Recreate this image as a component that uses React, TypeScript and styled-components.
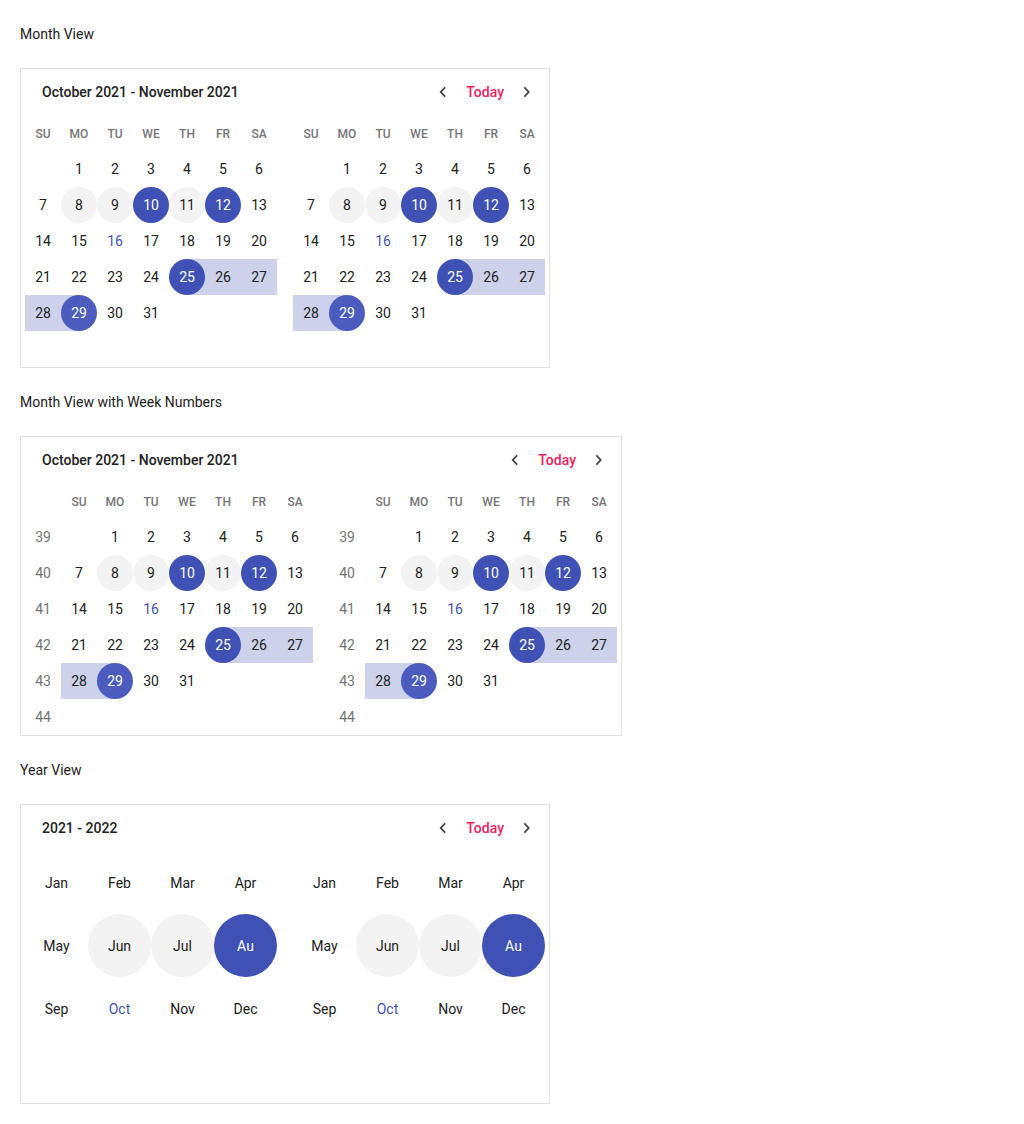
import React from "react";
import styled, { createGlobalStyle, css } from "styled-components";

const GlobalStyle = createGlobalStyle`
  html, body { margin: 0; padding: 0; background: #fff; }
  body { font-family: Roboto, "Noto Sans", Arial, sans-serif; color: #212121; }
  * { box-sizing: border-box; }
`;

const Page = styled.div`
  padding: 24px 20px;
  display: flex;
  flex-direction: column;
  align-items: flex-start;
  gap: 24px;
`;

const Label = styled.div`
  font-size: 14px;
  line-height: 20px;
  color: #212121;
`;

const Card = styled.div`
  height: 300px;
  border: 1px solid #e0e0e0;
  padding: 0 4px;
  display: flex;
  flex-direction: column;
  background: #fff;
`;

const Header = styled.div`
  height: 46px;
  flex-shrink: 0;
  display: flex;
  align-items: center;
  justify-content: space-between;
  padding: 0 6px 0 17px;
`;

const Title = styled.div`
  font-size: 14px;
  font-weight: 500;
  color: #212121;
`;

const Nav = styled.div`
  display: flex;
  align-items: center;
`;

const IconButton = styled.button`
  width: 24px;
  height: 24px;
  padding: 0;
  border: none;
  background: transparent;
  display: flex;
  align-items: center;
  justify-content: center;
  color: #424242;
  cursor: pointer;
`;

const TodayButton = styled.button`
  border: none;
  background: transparent;
  padding: 0 11px;
  height: 24px;
  font-family: inherit;
  font-size: 14px;
  font-weight: 500;
  color: #e91e63;
  cursor: pointer;
`;

const Panels = styled.div`
  display: flex;
  gap: 16px;
`;

const Grid = styled.div<{ $cols: number; $size: number }>`
  display: grid;
  grid-template-columns: repeat(${(p) => p.$cols}, ${(p) => p.$size}px);
`;

const WeekDay = styled.div`
  height: 36px;
  padding-top: 2px;
  display: flex;
  align-items: center;
  justify-content: center;
  font-size: 12px;
  font-weight: 500;
  color: #757575;
`;

const WeekNum = styled.div`
  height: 36px;
  display: flex;
  align-items: center;
  justify-content: center;
  font-size: 14px;
  color: #757575;
`;

type Range = "none" | "start" | "mid" | "end";

const RANGE_BG = "#cdd2ea";

const Cell = styled.div<{ $range: Range; $size: number }>`
  height: ${(p) => p.$size}px;
  display: flex;
  align-items: center;
  justify-content: center;
  ${(p) =>
    p.$range === "mid" &&
    css`
      background: ${RANGE_BG};
    `}
  ${(p) =>
    p.$range === "start" &&
    css`
      background: linear-gradient(to right, transparent 50%, ${RANGE_BG} 50%);
    `}
  ${(p) =>
    p.$range === "end" &&
    css`
      background: linear-gradient(to right, ${RANGE_BG} 50%, transparent 50%);
    `}
`;

type Mark = "none" | "hover" | "selected" | "selectedHover" | "today";

const Circle = styled.span<{ $mark: Mark; $size: number }>`
  width: ${(p) => p.$size}px;
  height: ${(p) => p.$size}px;
  border-radius: 50%;
  display: flex;
  align-items: center;
  justify-content: center;
  font-size: 14px;
  color: #212121;
  overflow: hidden;
  white-space: nowrap;
  ${(p) =>
    p.$mark === "hover" &&
    css`
      background: #f3f3f3;
    `}
  ${(p) =>
    p.$mark === "selected" &&
    css`
      background: #3f51b5;
      color: #fff;
    `}
  ${(p) =>
    p.$mark === "selectedHover" &&
    css`
      background: #4b5bbe;
      color: #fff;
    `}
  ${(p) =>
    p.$mark === "today" &&
    css`
      color: #3f51b5;
    `}
`;

const Chevron = ({ dir }: { dir: "left" | "right" }) => (
  <svg width="12" height="12" viewBox="0 0 12 12" fill="none">
    <path
      d={dir === "left" ? "M7.5 2 L3.8 6 L7.5 10" : "M4 2 L7.7 6 L4 10"}
      stroke="currentColor"
      strokeWidth="1.8"
      strokeLinecap="square"
      strokeLinejoin="miter"
    />
  </svg>
);

const CalHeader = ({ title }: { title: string }) => (
  <Header>
    <Title>{title}</Title>
    <Nav>
      <IconButton aria-label="previous">
        <Chevron dir="left" />
      </IconButton>
      <TodayButton>Today</TodayButton>
      <IconButton aria-label="next">
        <Chevron dir="right" />
      </IconButton>
    </Nav>
  </Header>
);

const WEEKDAYS = ["SU", "MO", "TU", "WE", "TH", "FR", "SA"];

const DAYS: (number | null)[][] = [
  [null, 1, 2, 3, 4, 5, 6],
  [7, 8, 9, 10, 11, 12, 13],
  [14, 15, 16, 17, 18, 19, 20],
  [21, 22, 23, 24, 25, 26, 27],
  [28, 29, 30, 31, null, null, null],
  [null, null, null, null, null, null, null],
];

const WEEK_NUMBERS = [39, 40, 41, 42, 43, 44];

const dayMark = (d: number): Mark => {
  if (d === 8 || d === 9 || d === 11) return "hover";
  if (d === 10 || d === 12 || d === 25) return "selected";
  if (d === 29) return "selectedHover";
  if (d === 16) return "today";
  return "none";
};

const dayRange = (d: number): Range => {
  if (d === 25) return "start";
  if (d === 29) return "end";
  if (d > 25 && d < 29) return "mid";
  return "none";
};

const MonthPanel = ({ weekNumbers }: { weekNumbers?: boolean }) => (
  <Grid $cols={weekNumbers ? 8 : 7} $size={36}>
    {weekNumbers && <WeekDay />}
    {WEEKDAYS.map((w) => (
      <WeekDay key={w}>{w}</WeekDay>
    ))}
    {DAYS.map((row, ri) => (
      <React.Fragment key={ri}>
        {weekNumbers && <WeekNum>{WEEK_NUMBERS[ri]}</WeekNum>}
        {row.map((d, ci) =>
          d === null ? (
            <Cell key={ci} $range="none" $size={36} />
          ) : (
            <Cell key={ci} $range={dayRange(d)} $size={36}>
              <Circle $mark={dayMark(d)} $size={36}>
                {d}
              </Circle>
            </Cell>
          )
        )}
      </React.Fragment>
    ))}
  </Grid>
);

const MONTHS = ["Jan", "Feb", "Mar", "Apr", "May", "Jun", "Jul", "Au", "Sep", "Oct", "Nov", "Dec"];

const monthMark = (m: string): Mark => {
  if (m === "Jun" || m === "Jul") return "hover";
  if (m === "Au") return "selected";
  if (m === "Oct") return "today";
  return "none";
};

const YearPanel = () => (
  <Grid $cols={4} $size={63}>
    {MONTHS.map((m) => (
      <Cell key={m} $range="none" $size={63}>
        <Circle $mark={monthMark(m)} $size={63}>
          {m}
        </Circle>
      </Cell>
    ))}
  </Grid>
);

export default function App() {
  return (
    <>
      <GlobalStyle />
      <Page>
        <Label>Month View</Label>
        <Card>
          <CalHeader title="October 2021 - November 2021" />
          <Panels>
            <MonthPanel />
            <MonthPanel />
          </Panels>
        </Card>
        <Label>Month View with Week Numbers</Label>
        <Card>
          <CalHeader title="October 2021 - November 2021" />
          <Panels>
            <MonthPanel weekNumbers />
            <MonthPanel weekNumbers />
          </Panels>
        </Card>
        <Label>Year View</Label>
        <Card>
          <CalHeader title="2021 - 2022" />
          <Panels>
            <YearPanel />
            <YearPanel />
          </Panels>
        </Card>
      </Page>
    </>
  );
}
